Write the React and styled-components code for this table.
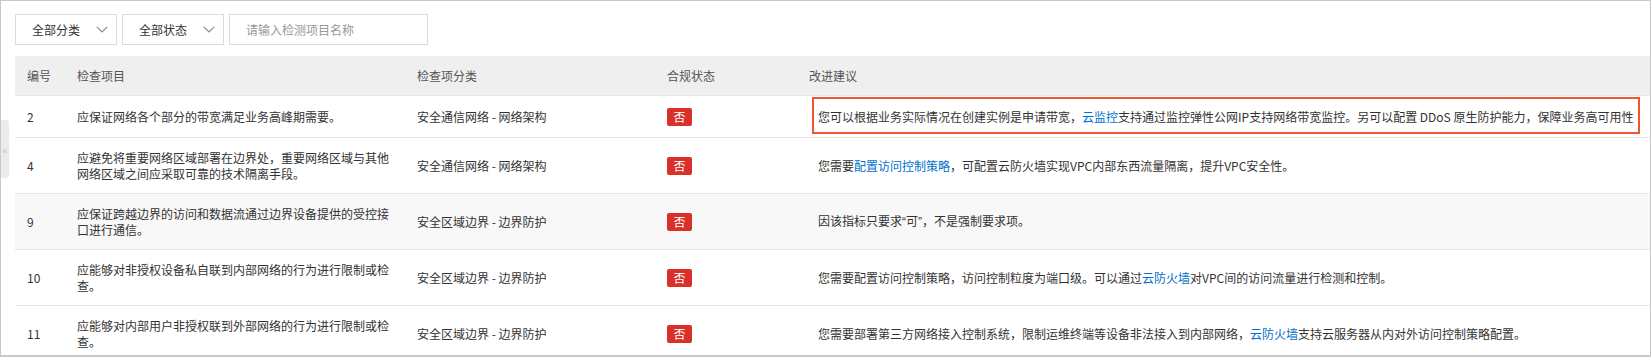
import styled, { createGlobalStyle } from "styled-components";

const GlobalStyle = createGlobalStyle`
  html, body {
    margin: 0;
    padding: 0;
    background: #fff;
  }
  body {
    font-family: "Noto Sans CJK SC", "Noto Sans", sans-serif;
    font-size: 12px;
    color: #333;
  }
`;

const Frame = styled.div`
  position: relative;
  box-sizing: border-box;
  width: 1651px;
  height: 357px;
  border: 1px solid #c8c8c8;
  border-bottom-width: 2px;
  padding: 13px 0 0 14px;
  overflow: hidden;
  background: #fff;
`;

const SideTab = styled.div`
  position: absolute;
  left: 0;
  top: 119px;
  width: 8px;
  height: 58px;
  background: #ebebeb;
  border-radius: 0 3px 3px 0;
  display: flex;
  align-items: center;
  justify-content: center;
  color: #c4c4c4;
  font-size: 10px;
  overflow: hidden;
`;

const Toolbar = styled.div`
  display: flex;
  gap: 5px;
  margin-bottom: 11px;
`;

const Select = styled.div`
  box-sizing: border-box;
  width: 102px;
  height: 31px;
  border: 1px solid #dcdcdc;
  display: flex;
  align-items: center;
  justify-content: space-between;
  padding: 0 8px 0 16px;
  color: #333;
  background: #fff;
`;

const SearchInput = styled.input`
  box-sizing: border-box;
  width: 199px;
  height: 31px;
  border: 1px solid #dcdcdc;
  padding: 0 16px;
  font-family: inherit;
  font-size: 12px;
  color: #333;
  outline: none;

  &::placeholder {
    color: #999;
  }
`;

const Grid = styled.div`
  display: grid;
  grid-template-columns: 50px 340px 250px 142px 1fr;
`;

const HeadRow = styled(Grid)`
  height: 40px;
  box-sizing: border-box;
  background: #efefef;
  border-bottom: 1px solid #e6e6e6;
  align-items: center;
  color: #555;
`;

const HeadCell = styled.div`
  padding: 0 12px;
`;

const Row = styled(Grid)`
  align-items: center;
  border-bottom: 1px solid #e6e6e6;
  background: ${(p) => (p.$hover ? "#f8f8f8" : "#fff")};
  line-height: 16px;
`;

const Cell = styled.div`
  padding: 11.5px 12px;
  position: relative;
  align-self: stretch;
  display: flex;
  align-items: center;
`;

const AdviceCell = styled(Cell)`
  padding-left: 21px;
  white-space: nowrap;

  ${(p) =>
    p.$marked &&
    `
    &::after {
      content: "";
      position: absolute;
      left: 15px;
      right: 10px;
      top: 1px;
      bottom: 3px;
      border: 2px solid #f0552f;
      pointer-events: none;
    }
  `}
`;

const Badge = styled.span`
  display: inline-flex;
  align-items: center;
  justify-content: center;
  width: 25px;
  height: 18px;
  border-radius: 2px;
  background: #d9312a;
  color: #fff;
  font-size: 12px;
`;

const Link = styled.a`
  color: #0070cc;
  text-decoration: none;
`;

const Quote = styled.span`
  font-family: "Liberation Sans", sans-serif;
`;

function Chevron() {
  return (
    <svg width="12" height="7" viewBox="0 0 12 7" fill="none">
      <polyline
        points="0.8,0.8 6,6 11.2,0.8"
        stroke="#8a8a8a"
        strokeWidth="1.2"
      />
    </svg>
  );
}

const rows = [
  {
    id: 2,
    item: "应保证网络各个部分的带宽满足业务高峰期需要。",
    type: "安全通信网络 - 网络架构",
    marked: true,
    advice: (
      <>
        您可以根据业务实际情况在创建实例是申请带宽，<Link href="#">云监控</Link>
        支持通过监控弹性公网IP支持网络带宽监控。另可以配置 DDoS
        原生防护能力，保障业务高可用性
      </>
    ),
  },
  {
    id: 4,
    item: "应避免将重要网络区域部署在边界处，重要网络区域与其他网络区域之间应采取可靠的技术隔离手段。",
    type: "安全通信网络 - 网络架构",
    advice: (
      <>
        您需要<Link href="#">配置访问控制策略</Link>
        ，可配置云防火墙实现VPC内部东西流量隔离，提升VPC安全性。
      </>
    ),
  },
  {
    id: 9,
    item: "应保证跨越边界的访问和数据流通过边界设备提供的受控接口进行通信。",
    type: "安全区域边界 - 边界防护",
    hover: true,
    advice: (
      <>
        因该指标只要求<Quote>“</Quote>可<Quote>”</Quote>，不是强制要求项。
      </>
    ),
  },
  {
    id: 10,
    item: "应能够对非授权设备私自联到内部网络的行为进行限制或检查。",
    type: "安全区域边界 - 边界防护",
    advice: (
      <>
        您需要配置访问控制策略，访问控制粒度为端口级。可以通过
        <Link href="#">云防火墙</Link>对VPC间的访问流量进行检测和控制。
      </>
    ),
  },
  {
    id: 11,
    item: "应能够对内部用户非授权联到外部网络的行为进行限制或检查。",
    type: "安全区域边界 - 边界防护",
    advice: (
      <>
        您需要部署第三方网络接入控制系统，限制运维终端等设备非法接入到内部网络，
        <Link href="#">云防火墙</Link>支持云服务器从内对外访问控制策略配置。
      </>
    ),
  },
];

export default function App() {
  return (
    <>
      <GlobalStyle />
      <Frame>
        <SideTab>«</SideTab>
        <Toolbar>
          <Select>
            全部分类
            <Chevron />
          </Select>
          <Select>
            全部状态
            <Chevron />
          </Select>
          <SearchInput placeholder="请输入检测项目名称" />
        </Toolbar>

        <HeadRow>
          <HeadCell>编号</HeadCell>
          <HeadCell>检查项目</HeadCell>
          <HeadCell>检查项分类</HeadCell>
          <HeadCell>合规状态</HeadCell>
          <HeadCell>改进建议</HeadCell>
        </HeadRow>

        {rows.map((r) => (
          <Row key={r.id} $hover={r.hover}>
            <Cell>{r.id}</Cell>
            <Cell>{r.item}</Cell>
            <Cell>{r.type}</Cell>
            <Cell>
              <Badge>否</Badge>
            </Cell>
            <AdviceCell $marked={r.marked}>
              <span>{r.advice}</span>
            </AdviceCell>
          </Row>
        ))}
      </Frame>
    </>
  );
}
